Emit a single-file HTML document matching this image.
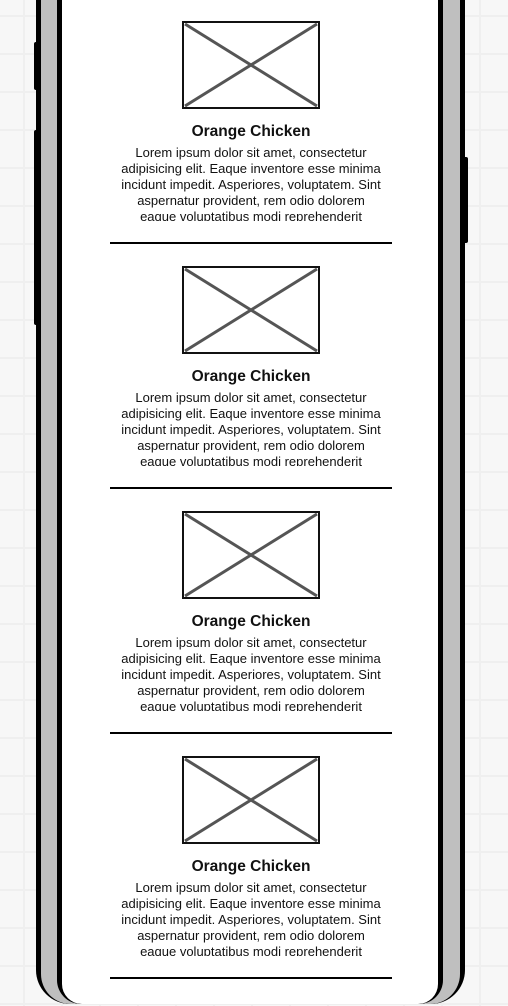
<!DOCTYPE html>
<html><head><style>
html,body{margin:0;padding:0;width:508px;height:1006px;overflow:hidden;background:#f7f7f7;
background-image:linear-gradient(#efefef 2px,transparent 2px),linear-gradient(90deg,#efefef 2px,transparent 2px);
background-size:38px 38px;background-position:0 15px,23px 0;position:relative;font-family:"Liberation Sans",sans-serif;}
.outer{position:absolute;left:36px;top:-40px;width:429px;height:1044px;background:#000;border-radius:34px;}
.gray{position:absolute;left:41px;top:-40px;width:419px;height:1044px;background:#bfbfbf;border-radius:30px;}
.inner{position:absolute;left:57px;top:-40px;width:386px;height:1044px;background:#000;border-radius:24px;}
.screen{position:absolute;left:62px;top:-40px;width:376px;height:1044px;background:#fff;border-radius:20px;}
.btn{position:absolute;background:#000;border-radius:2px;}
.card{position:absolute;left:0;width:508px;height:245px;}
.img{position:absolute;left:182px;top:21px;width:134px;height:84px;border:2px solid #111;}
.img svg{position:absolute;left:0;top:0}
.t{position:absolute;left:0;width:502px;top:123px;text-align:center;font-weight:bold;font-size:15.5px;color:#111;}
.p{position:absolute;left:90px;width:322px;top:145px;height:76px;overflow:hidden;text-align:center;font-size:13px;line-height:16px;color:#111;white-space:nowrap;}
.hr{position:absolute;left:110px;width:282px;top:242px;height:2px;background:#000;}
</style></head><body>
<div class="outer"></div><div class="gray"></div><div class="inner"></div><div class="screen"></div>
<div class="btn" style="left:34px;top:42px;width:5px;height:48px"></div>
<div class="btn" style="left:34px;top:130px;width:5px;height:195px"></div>
<div class="btn" style="left:462px;top:157px;width:6px;height:86px"></div>
<div class="card" style="top:0">
<div class="img"><svg width="134" height="84"><path d="M1 1L133 83M133 1L1 83" stroke="#555" stroke-width="3"/></svg></div>
<div class="t">Orange Chicken</div>
<div class="p">Lorem ipsum dolor sit amet, consectetur<br>adipisicing elit. Eaque inventore esse minima<br>incidunt impedit. Asperiores, voluptatem. Sint<br>aspernatur provident, rem odio dolorem<br>eaque voluptatibus modi reprehenderit</div>
<div class="hr"></div></div>
<div class="card" style="top:245px">
<div class="img"><svg width="134" height="84"><path d="M1 1L133 83M133 1L1 83" stroke="#555" stroke-width="3"/></svg></div>
<div class="t">Orange Chicken</div>
<div class="p">Lorem ipsum dolor sit amet, consectetur<br>adipisicing elit. Eaque inventore esse minima<br>incidunt impedit. Asperiores, voluptatem. Sint<br>aspernatur provident, rem odio dolorem<br>eaque voluptatibus modi reprehenderit</div>
<div class="hr"></div></div>
<div class="card" style="top:490px">
<div class="img"><svg width="134" height="84"><path d="M1 1L133 83M133 1L1 83" stroke="#555" stroke-width="3"/></svg></div>
<div class="t">Orange Chicken</div>
<div class="p">Lorem ipsum dolor sit amet, consectetur<br>adipisicing elit. Eaque inventore esse minima<br>incidunt impedit. Asperiores, voluptatem. Sint<br>aspernatur provident, rem odio dolorem<br>eaque voluptatibus modi reprehenderit</div>
<div class="hr"></div></div>
<div class="card" style="top:735px">
<div class="img"><svg width="134" height="84"><path d="M1 1L133 83M133 1L1 83" stroke="#555" stroke-width="3"/></svg></div>
<div class="t">Orange Chicken</div>
<div class="p">Lorem ipsum dolor sit amet, consectetur<br>adipisicing elit. Eaque inventore esse minima<br>incidunt impedit. Asperiores, voluptatem. Sint<br>aspernatur provident, rem odio dolorem<br>eaque voluptatibus modi reprehenderit</div>
<div class="hr"></div></div>
</body></html>
